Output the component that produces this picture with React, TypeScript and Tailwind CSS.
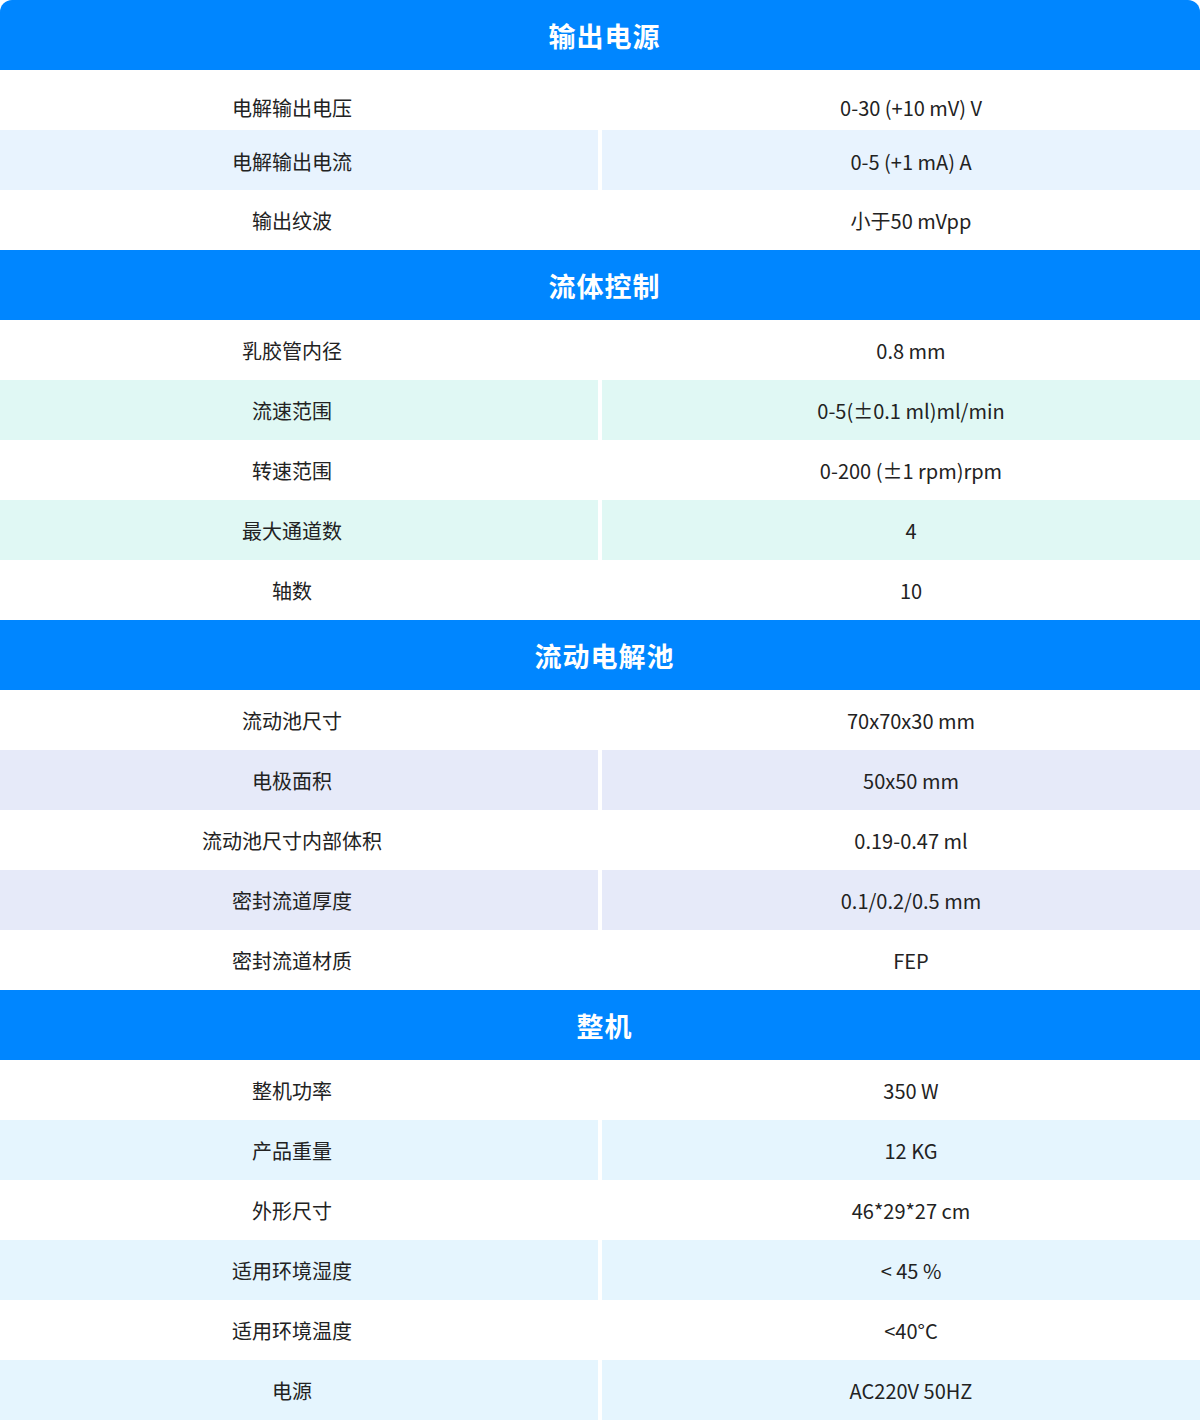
import * as React from 'react';

type Row = { label: string; value: string; nudge?: string };
type Section = { title: string; stripe: string; rows: Row[] };

const sections: Section[] = [
  {
    title: '输出电源',
    stripe: 'bg-[#e8f3fe]',
    rows: [
      { label: '电解输出电压', value: '0-30 (+10 mV) V', nudge: 'pt-4' },
      { label: '电解输出电流', value: '0-5 (+1 mA) A', nudge: 'pt-[4px]' },
      { label: '输出纹波', value: '小于50 mVpp' },
    ],
  },
  {
    title: '流体控制',
    stripe: 'bg-[#e0f8f4]',
    rows: [
      { label: '乳胶管内径', value: '0.8 mm' },
      { label: '流速范围', value: '0-5(±0.1 ml)ml/min' },
      { label: '转速范围', value: '0-200 (±1 rpm)rpm' },
      { label: '最大通道数', value: '4' },
      { label: '轴数', value: '10' },
    ],
  },
  {
    title: '流动电解池',
    stripe: 'bg-[#e6eaf9]',
    rows: [
      { label: '流动池尺寸', value: '70x70x30 mm' },
      { label: '电极面积', value: '50x50 mm' },
      { label: '流动池尺寸内部体积', value: '0.19-0.47 ml' },
      { label: '密封流道厚度', value: '0.1/0.2/0.5 mm' },
      { label: '密封流道材质', value: 'FEP' },
    ],
  },
  {
    title: '整机',
    stripe: 'bg-[#e5f5fe]',
    rows: [
      { label: '整机功率', value: '350 W' },
      { label: '产品重量', value: '12 KG' },
      { label: '外形尺寸', value: '46*29*27 cm' },
      { label: '适用环境湿度', value: '< 45 %' },
      { label: '适用环境温度', value: '<40°C' },
      { label: '电源', value: 'AC220V 50HZ' },
    ],
  },
];

function SpecRow({ row, striped, stripe }: { row: Row; striped: boolean; stripe: string }) {
  const cell = `flex h-[60px] items-center justify-center ${row.nudge ?? 'pt-[2px]'} ${striped ? stripe : 'bg-white'}`;
  return (
    <div className="grid grid-cols-[598px_598px] gap-x-[4px] bg-white text-[20px] text-[#222222]">
      <div className={`${cell} pr-[14px]`}>{row.label}</div>
      <div className={`${cell} pl-[20px]`}>{row.value}</div>
    </div>
  );
}

export default function App() {
  return (
    <div
      className="w-[1200px] overflow-hidden rounded-t-[12px] bg-white"
      style={{ fontFamily: '"Noto Sans CJK SC", "Noto Sans", sans-serif' }}
    >
      {sections.map(section => (
        <section key={section.title}>
          <h2 className="flex h-[70px] items-center justify-center bg-[#0086ff] pl-[9px] pt-[2px] text-[27px] font-bold tracking-[1px] text-white">
            {section.title}
          </h2>
          {section.rows.map((row, i) => (
            <SpecRow key={row.label} row={row} striped={i % 2 === 1} stripe={section.stripe} />
          ))}
        </section>
      ))}
    </div>
  );
}
